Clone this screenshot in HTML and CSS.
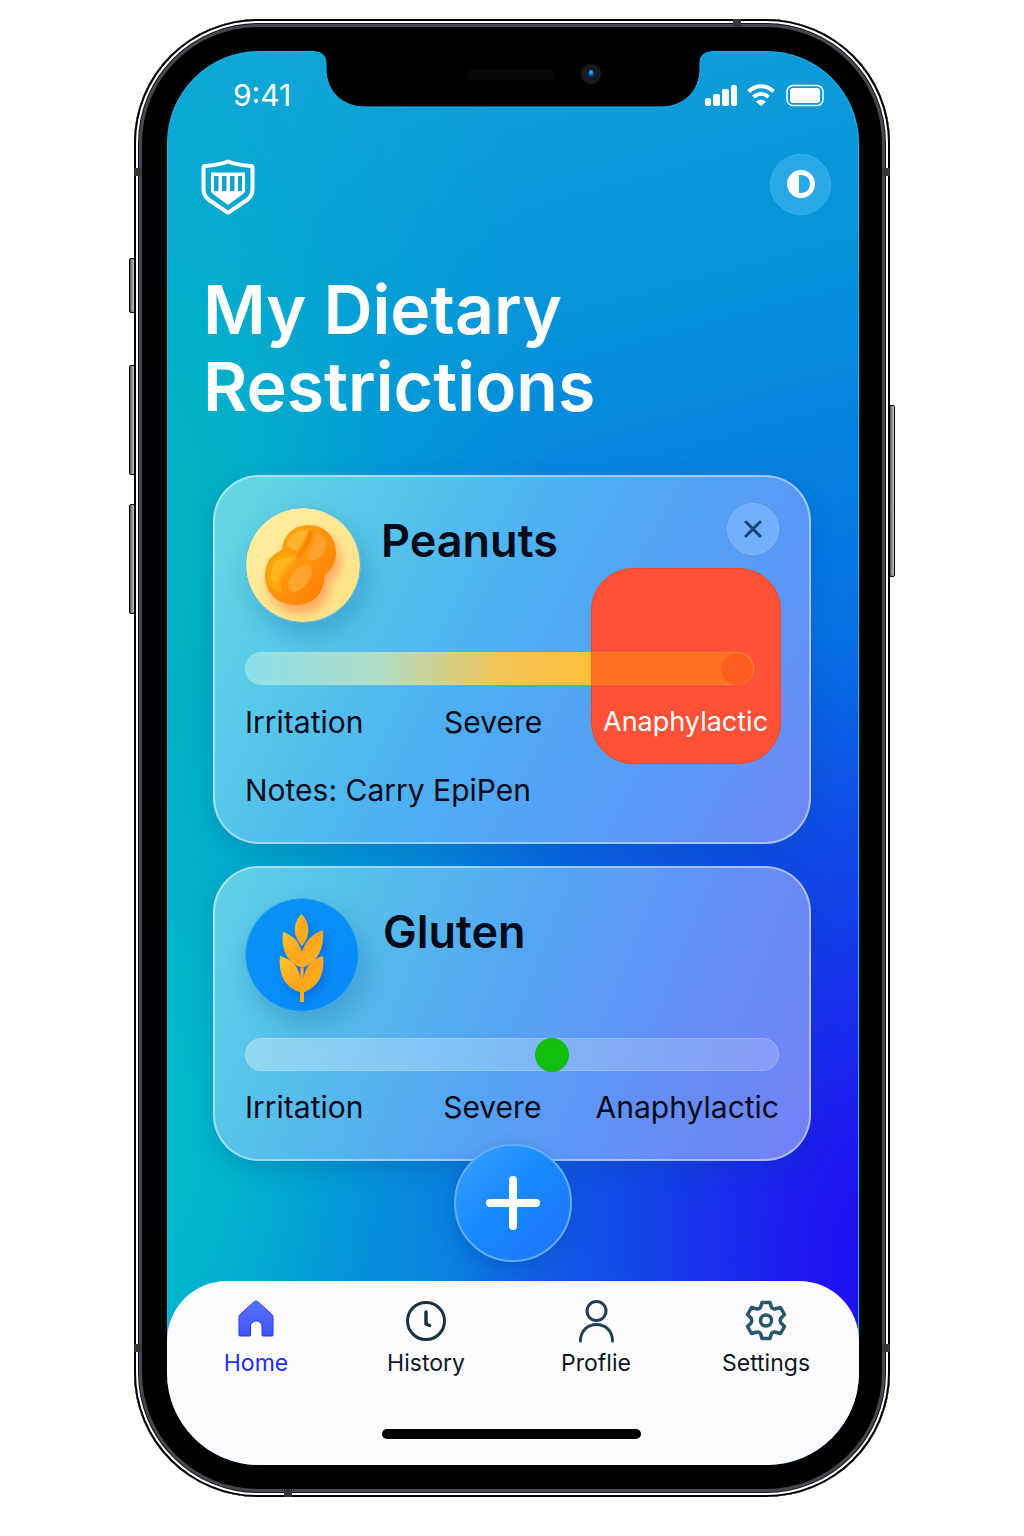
FILE: index.html
```html
<!DOCTYPE html>
<html lang="en">
<head>
<meta charset="utf-8">
<meta name="viewport" content="width=device-width, initial-scale=1">
<title>My Dietary Restrictions</title>
<link rel="stylesheet" href="styles.css">
</head>
<body>
<div class="phone">
  <span class="key key-mute"></span>
  <span class="key key-up"></span>
  <span class="key key-down"></span>
  <span class="key key-power"></span>
  <span class="band band-top"></span>
  <span class="band band-bottom"></span>
  <span class="band band-left-upper"></span>
  <span class="band band-left-lower"></span>
  <span class="band band-right-upper"></span>
  <span class="band band-right-lower"></span>

  <div class="screen">
    <svg class="notch" viewBox="0 0 396 57" width="396" height="57" aria-hidden="true">
      <defs>
        <radialGradient id="lens"><stop offset="0" stop-color="#1c6fd8"/><stop offset=".35" stop-color="#0c2c66"/><stop offset=".6" stop-color="#14161c"/><stop offset="1" stop-color="#202022"/></radialGradient>
      </defs>
      <path d="M0 0H396V1C389 1 385 5 385 12V18C385 40 369 56 346 56H50C27 56 11 40 11 18V12C11 5 7 1 0 1Z" fill="#000"/>
      <path d="M0 1C7 1 11 5 11 12V18C11 40 27 56 50 56H346C369 56 385 40 385 18V12C385 5 389 1 396 1" fill="none" stroke="#10b4f4"/>
      <rect x="152" y="18" width="88" height="11" rx="5" fill="#080707"/>
      <circle cx="276" cy="23" r="11" fill="#0b0b0c"/>
      <circle cx="276" cy="23" r="8" fill="url(#lens)"/>
      <circle cx="276" cy="23" r="9" fill="none" stroke="#252526"/>
      <circle cx="276" cy="21" r="2" fill="#3a9bff"/>
    </svg>

    <div class="status">
      <time class="clock">9:41</time>
      <svg viewBox="0 0 120 24" width="120" height="24" role="img" aria-label="Signal, Wi-Fi and battery">
        <g fill="#fff">
          <rect x="0" y="15" width="6" height="8" rx="2"/>
          <rect x="8" y="11" width="7" height="12" rx="2"/>
          <rect x="17" y="6" width="7" height="17" rx="2"/>
          <rect x="26" y="2" width="6" height="21" rx="2"/>
          <path d="M56 22.500L51.500 18.500Q56 15.500 60.500 18.500Z" stroke="#fff" stroke-linejoin="round"/>
          <rect x="85" y="5" width="30" height="15" rx="3"/>
        </g>
        <g fill="none" stroke="#fff">
          <path d="M43.500 8.500C51 1.500 61 1.500 68.500 8.500" stroke-width="4"/>
          <path d="M48.500 14C53 10 59 10 63.500 14" stroke-width="4"/>
          <rect x="82" y="2.500" width="36" height="20" rx="6" stroke-width="1.500"/>
        </g>
      </svg>
    </div>

    <header class="topbar">
      <svg class="shield" viewBox="0 0 54 56" width="54" height="56" role="img" aria-label="Allergy shield">
        <path d="M27 2.500C19 5.500 11 6.500 4 7C2.800 7.100 2.500 8 2.500 9V30C2.500 35 4 38 8 41L26 53.200Q27 53.700 28 53.200L46 41C50 38 51.500 35 51.500 30V9C51.500 8 51.200 7.100 50 7C43 6.500 35 5.500 27 2.500Z" fill="none" stroke="#fff" stroke-width="4" stroke-linejoin="round"/>
        <path d="M10 13.500H44V31C44 33 43 34 42 35L27 46L12 35C11 34 10 33 10 31Z" fill="#fff"/>
        <path d="M13 17h4.500v15h-4.500zM21 17h4.500v15h-4.500zM29 17h4.500v15h-4.500zM37 17h4v15h-4z" fill="#159fd3"/>
      </svg>
      <button class="round-button" type="button" aria-label="Toggle contrast">
        <svg viewBox="0 0 28 28" width="28" height="28" aria-hidden="true">
          <circle cx="14" cy="14" r="14" fill="#fff"/>
          <path d="M12 5H14C19.500 5 23 9 23 14S19.500 23 14 23H12Z" fill="#28a8e6"/>
        </svg>
      </button>
    </header>

    <main class="content">
      <h1>My Dietary<br>Restrictions</h1>

      <div class="cards">
        <section class="card peanuts" aria-labelledby="peanuts-title">
          <div class="danger-zone"></div>
          <div class="card-head">
            <svg class="food" viewBox="0 0 116 116" aria-hidden="true">
              <defs>
                <linearGradient id="cream" x1="0" y1="0" x2="1" y2="1"><stop offset="0" stop-color="#fff0a4"/><stop offset="1" stop-color="#ffe083"/></linearGradient>
                <linearGradient id="nut" x1="0" y1="0" x2="1" y2="1"><stop offset="0" stop-color="#ffae0b"/><stop offset="1" stop-color="#ff7905"/></linearGradient>
                <filter id="nutShadow" x="-40%" y="-40%" width="180%" height="190%"><feDropShadow dx="4" dy="8" stdDeviation="6" flood-color="#ff8040" flood-opacity=".65"/></filter>
              </defs>
              <circle cx="58" cy="58" r="57.500" fill="url(#cream)" stroke="#49b9e0"/>
              <g filter="url(#nutShadow)">
                <path d="M37 43C38 27 50 18 64 18C80 18 91 30 91 46C91 56 86 63 79 68C81 84 69 98 51 98C33 98 20 86 20 69C20 55 27 47 37 43Z" fill="url(#nut)"/>
              </g>
              <path d="M41 39C44 27 53 23 63 24C60 31 57 38 51 44C47 41 44 40 41 39Z" fill="#ffb52e"/>
              <path d="M71 25C82 28 83 40 77 48C73 54 68 54 61 52C65 44 68 35 71 25Z" fill="#ffa12c"/>
              <path d="M66 24C64 34 60 42 53 50" fill="none" stroke="#fa8500" stroke-width="4"/>
              <path d="M22 67C22 53 34 44 48 47C56 50 49 57 42 63C34 71 34 78 38 86C28 84 22 77 22 67Z" fill="#ffa60a"/>
              <path d="M26 67C27 54 37 49 47 51C49 57 33 61 34 75C31 77 25 75 26 67Z" fill="#ffb51b"/>
              <path d="M48 67C54 58 63 54 66 60C69 68 60 82 51 85C41 86 42 75 48 67Z" fill="#ffa42b"/>
            </svg>
            <h2 id="peanuts-title">Peanuts</h2>
            <button class="close" type="button" aria-label="Remove Peanuts">
              <svg viewBox="0 0 18 18" width="18" height="18" aria-hidden="true"><path d="M2 2L16 16M16 2L2 16" stroke="#174776" stroke-width="3" stroke-linecap="round"/></svg>
            </button>
          </div>
          <input class="slider" type="range" min="0" max="100" value="100" aria-label="Peanuts severity">
          <div class="levels"><span>Irritation</span><span>Severe</span><span class="level-active">Anaphylactic</span></div>
          <p class="notes">Notes: Carry EpiPen</p>
        </section>

        <section class="card gluten" aria-labelledby="gluten-title">
          <div class="card-head">
            <svg class="food" viewBox="0 0 114 114" aria-hidden="true">
              <defs>
                <linearGradient id="sky" x1="0" y1="0" x2="1" y2="1"><stop offset="0" stop-color="#0893f5"/><stop offset="1" stop-color="#0989fc"/></linearGradient>
                <linearGradient id="grain" x1="0" y1="0" x2="1" y2="1"><stop offset="0" stop-color="#ffc72d"/><stop offset=".5" stop-color="#ffa41c"/><stop offset="1" stop-color="#ffb923"/></linearGradient>
                <filter id="grainShadow" x="-40%" y="-20%" width="180%" height="150%"><feDropShadow dx="3" dy="5" stdDeviation="4" flood-color="#034fae" flood-opacity=".45"/></filter>
              </defs>
              <circle cx="57" cy="57" r="56.500" fill="url(#sky)" stroke="#36a8e8"/>
              <g fill="url(#grain)" filter="url(#grainShadow)">
                <path d="M56.500 16C65 25 66 37 57 48C47 37 48 25 56.500 16Z"/>
                <path d="M38 34C49 38 54 44 57 54C60 44 67 36 78 32C79 52 73 63 57 70C42 64 36 52 38 34Z"/>
                <path d="M35 58C48 62 54 69 55.500 81V70H58.500V81C60 69 67 61 78 58C80 76 73 89 59 94V104H55V94C41 90 33 77 35 58Z"/>
              </g>
            </svg>
            <h2 id="gluten-title">Gluten</h2>
          </div>
          <input class="slider" type="range" min="0" max="100" value="58" aria-label="Gluten severity">
          <div class="levels"><span>Irritation</span><span>Severe</span><span>Anaphylactic</span></div>
        </section>
      </div>

      <button class="add" type="button" aria-label="Add restriction">
        <svg viewBox="0 0 54 54" width="54" height="54" aria-hidden="true"><path d="M27 4V50M4 27H50" stroke="#fff" stroke-width="8" stroke-linecap="round"/></svg>
      </button>
    </main>

    <nav class="tabs">
      <div class="tab-list">
        <a class="tab tab-current" href="#home" aria-current="page">
          <svg viewBox="0 0 44 44" width="44" height="44" aria-hidden="true">
            <defs><linearGradient id="roof" x1="0" y1="0" x2="0" y2="1"><stop offset="0" stop-color="#5577fb"/><stop offset="1" stop-color="#3f52f8"/></linearGradient></defs>
            <path d="M20.500 2.500Q22 1.500 23.500 2.500L37.500 15Q39 16.300 39 18V36Q39 37 38 37H29Q28 37 28 36V28C28 20 16.500 20 16.500 28V36Q16.500 37 15.500 37H6Q5 37 5 36V18Q5 16.300 6.500 15Z" fill="url(#roof)" stroke="#2a35f4"/>
          </svg>
          <span>Home</span>
        </a>
        <a class="tab" href="#history">
          <svg viewBox="0 0 44 44" width="44" height="44" fill="none" stroke="#18323f" aria-hidden="true">
            <circle cx="22" cy="22" r="18.500" stroke-width="3"/><path d="M22 13V25L25.500 26.500" stroke-width="3.500" stroke-linecap="round" stroke-linejoin="round"/>
          </svg>
          <span>History</span>
        </a>
        <a class="tab" href="#profile">
          <svg viewBox="0 0 44 44" width="44" height="44" fill="none" stroke="#1e4052" stroke-width="3" aria-hidden="true">
            <circle cx="22.500" cy="12" r="9.500"/><path d="M6.500 42C6.500 20 38.500 20 38.500 42" stroke-linecap="round"/>
          </svg>
          <span>Proflie</span>
        </a>
        <a class="tab" href="#settings">
          <svg viewBox="0 0 44 44" width="44" height="44" fill="none" stroke="#28566a" stroke-width="3.500" stroke-linejoin="round" aria-hidden="true">
            <path d="M18 3.500H26L27.500 8.500Q29 10.500 31.500 9.800L36.500 8.500L40.500 15.500L37 19Q35.500 21.500 37 24L40.500 27.500L36.500 34.500L31.500 33.200Q29 32.500 27.500 34.500L26 39.500H18L16.500 34.500Q15 32.500 12.500 33.200L7.500 34.500L3.500 27.500L7 24Q8.500 21.500 7 19L3.500 15.500L7.500 8.500L12.500 9.800Q15 10.500 16.500 8.500Z"/>
            <circle cx="22" cy="21.500" r="5.500"/>
          </svg>
          <span>Settings</span>
        </a>
      </div>
      <div class="home-bar"></div>
    </nav>
  </div>
</div>
</body>
</html>
```

FILE: styles.css
```css
*,
*::before,
*::after {
  box-sizing: border-box;
}

body {
  margin: 0;
  padding: 19px 16px;
  background: #fff;
  color: #040a18;
  font-family: Inter, "Liberation Sans", sans-serif;
}

h1,
h2,
p {
  margin: 0;
}

button {
  padding: 0;
  border: 0;
  font: inherit;
  cursor: pointer;
}

svg {
  display: block;
  flex: none;
}

/* Device frame */
.phone {
  position: relative;
  max-width: 756px;
  margin: 0 auto;
  padding: 32px 31px 32px 33px;
  border-radius: 124px;
  background: #000;
  box-shadow: inset 0 0 0 2px #000, inset 0 0 0 4px #fff, inset 0 0 0 5px #15151a, inset 0 0 0 8px #474850;
}

.key {
  position: absolute;
  left: -5px;
  width: 6px;
  border: 1px solid #000;
  border-radius: 2px;
  background: linear-gradient(90deg, #555, #ccc);
}

.key-mute {
  top: 239px;
  height: 55px;
}

.key-up {
  top: 346px;
  height: 110px;
}

.key-down {
  top: 485px;
  height: 110px;
}

.key-power {
  top: 386px;
  right: -5px;
  left: auto;
  height: 172px;
}

.band {
  position: absolute;
  width: 8px;
  height: 8px;
  background: #34353b;
}

.band-top {
  top: 0;
  right: 149px;
}

.band-bottom {
  bottom: 0;
  left: 150px;
}

.band-left-upper,
.band-right-upper {
  top: 149px;
}

.band-left-lower,
.band-right-lower {
  bottom: 145px;
}

.band-left-upper,
.band-left-lower {
  left: 0;
}

.band-right-upper,
.band-right-lower {
  right: 0;
}

/* Screen */
.screen {
  position: relative;
  display: flex;
  flex-direction: column;
  overflow: hidden;
  border-radius: 92px;
  background:
    radial-gradient(ellipse 66% 46% at 106% 86%, #2008f2 0%, #1e10f0d9 28%, #1a20ec70 62%, #1430e800 100%),
    radial-gradient(ellipse 60% 60% at -4% 36%, #00b6be 0%, #00b8c4b3 30%, #00b4cc4d 60%, #00b0d800 100%),
    radial-gradient(ellipse 64% 60% at -4% 76%, #00c2cc 0%, #00bccce6 22%, #00aed480 55%, #00a0dc00 100%),
    linear-gradient(165deg, #14a3d8 0%, #0795da 22%, #0478e2 42%, #0a64e4 62%, #1078e2 100%);
  box-shadow: inset 0 0 0 1px #12b8ee;
}

.notch {
  position: absolute;
  top: 0;
  left: 50%;
  transform: translateX(-50%);
}

.status {
  display: flex;
  align-items: center;
  justify-content: space-between;
  margin-top: 26px;
  padding: 0 34px 0 66px;
  color: #fff;
}

.clock {
  font-size: 30px;
  line-height: 36px;
}

.topbar {
  display: flex;
  align-items: center;
  justify-content: space-between;
  margin-top: 40px;
  padding: 0 28px 0 34px;
}

.shield {
  margin-top: 6px;
}

.round-button {
  display: grid;
  place-items: center;
  width: 61px;
  height: 61px;
  border: 1px solid #3bb2ea;
  border-radius: 50%;
  background: #28a8e6;
}

.content {
  display: flex;
  flex-direction: column;
}

h1 {
  margin-top: 56px;
  padding: 0 34px 0 36px;
  color: #fff;
  font-size: 68px;
  font-weight: 600;
  line-height: 77px;
}

/* Restriction cards */
.cards {
  display: flex;
  flex-direction: column;
  gap: 22px;
  margin-top: 50px;
  padding: 0 48px 0 46px;
}

.card {
  position: relative;
  padding: 30px 30px 34px;
  border: 2px solid #ffffff70;
  border-radius: 46px;
  background-origin: border-box;
  box-shadow: 0 8px 24px #00408038;
}

.peanuts {
  background-image: linear-gradient(118deg, #66d8e0 0%, #56c8ea 22%, #4daff2 46%, #5899f5 76%, #7086f7 100%);
}

.gluten {
  background-image: linear-gradient(112deg, #60d2e6 0%, #56bdec 24%, #54a6f2 48%, #6290f5 72%, #7480f6 100%);
}

.danger-zone {
  position: absolute;
  top: 91px;
  right: 28px;
  width: 190px;
  height: 196px;
  border: 1px solid #f4461f;
  border-radius: 42px;
  background: #ff5038;
}

.card-head {
  display: flex;
  align-items: flex-start;
  gap: 20px;
}

.food {
  width: 116px;
  height: 116px;
  border-radius: 50%;
  box-shadow: 6px 12px 24px #1464a052;
}

.gluten .card-head {
  gap: 24px;
}

.gluten .food {
  width: 114px;
  height: 114px;
}

h2 {
  flex: 1;
  margin-top: 8px;
  font-size: 45px;
  font-weight: 600;
  line-height: 52px;
}

.close {
  display: grid;
  place-items: center;
  width: 52px;
  height: 52px;
  margin-top: -4px;
  border: 1px solid #85b8fb;
  border-radius: 50%;
  background: #75aefa;
}

.slider {
  position: relative;
  display: block;
  width: 100%;
  height: 33px;
  margin: 26px 0 0;
  border: 1px solid #ffffff30;
  border-radius: 17px;
  background: linear-gradient(90deg, #ffffff52, #ffffff2e) border-box;
  appearance: none;
  -webkit-appearance: none;
}

.slider::-webkit-slider-thumb {
  width: 34px;
  height: 34px;
  border-radius: 50%;
  background: radial-gradient(circle, #14c60e 0%, #10b80e 100%);
  appearance: none;
  -webkit-appearance: none;
}

.peanuts .slider {
  width: calc(100% - 25px);
  margin-top: 29px;
  border-color: #ffffff18;
  background: linear-gradient(90deg, #8be0ea 0%, #b1dcc4 27%, #f0c456 50%, #ffc03a 68%, #ff7022 68%, #ff7022 92%, #ff7e1c 100%) border-box;
}

.peanuts .slider::-webkit-slider-thumb {
  width: 32px;
  height: 32px;
  background: #ff5d20;
}

.levels {
  position: relative;
  display: grid;
  grid-template-columns: 199fr 153fr 182fr;
  margin-top: 18px;
  font-size: 30px;
  line-height: 36px;
  white-space: nowrap;
}

.peanuts .levels {
  margin-top: 19px;
}

.level-active {
  color: #fff;
  font-size: 27px;
}

.peanuts .level-active {
  padding-left: 6px;
}

.notes {
  margin-top: 32px;
  font-size: 30px;
  line-height: 36px;
}

.add {
  position: relative;
  display: grid;
  place-items: center;
  align-self: center;
  width: 118px;
  height: 118px;
  margin-top: -17px;
  border: 2px solid #62acfa;
  border-radius: 50%;
  background: linear-gradient(135deg, #35a0ff 0%, #1688ff 50%, #2472fa 100%);
  box-shadow: 0 6px 20px #0440a04d;
}

/* Bottom navigation */
.tabs {
  display: flex;
  flex-direction: column;
  align-items: center;
  margin-top: 19px;
  padding: 18px 8px 26px 4px;
  border-radius: 60px 60px 0 0;
  background: #fcfcfe;
}

.tab-list {
  display: grid;
  grid-template-columns: repeat(4, 1fr);
  width: 100%;
}

.tab {
  display: flex;
  flex-direction: column;
  align-items: center;
  gap: 4px;
  color: #10161f;
  font-size: 23px;
  line-height: 32px;
  text-decoration: none;
}

.tab-current {
  color: #1f2df5;
}

.home-bar {
  width: 259px;
  max-width: 60%;
  height: 10px;
  margin-top: 50px;
  border-radius: 5px;
  background: #000;
}
```
